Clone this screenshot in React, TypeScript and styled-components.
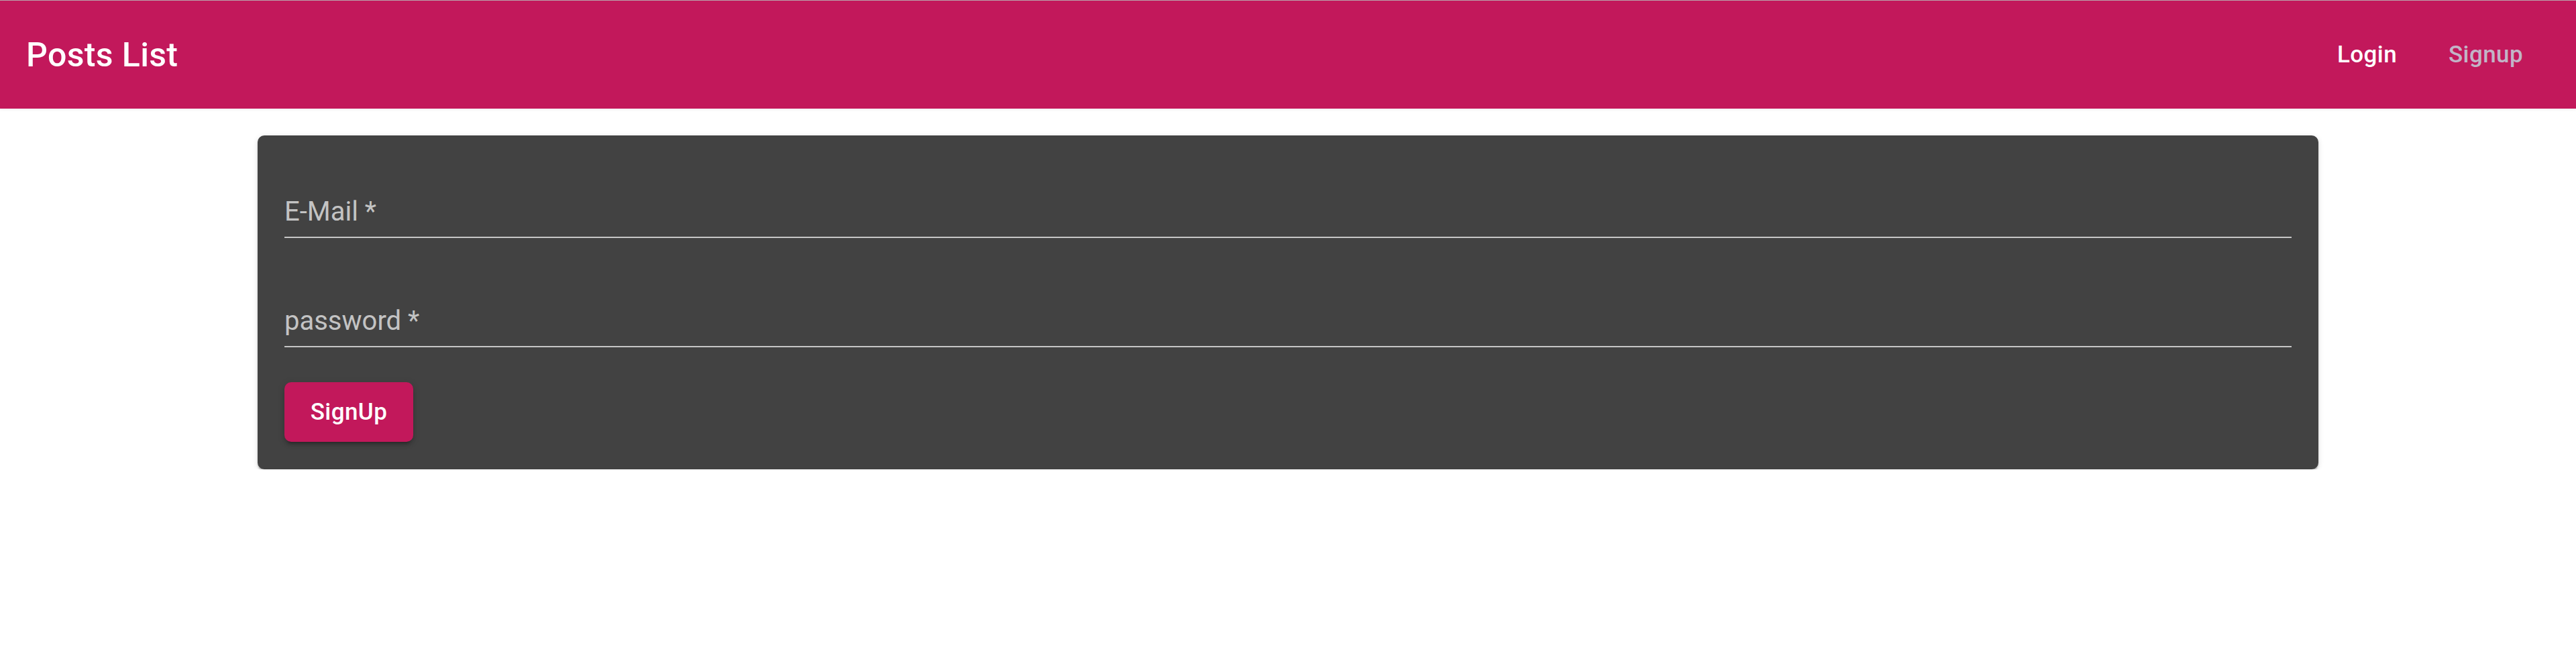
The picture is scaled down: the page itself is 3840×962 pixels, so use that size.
import React from "react";
import styled, { createGlobalStyle } from "styled-components";

const GlobalStyle = createGlobalStyle`
  html, body {
    margin: 0;
    padding: 0;
    background: #ffffff;
    font-family: Roboto, "Liberation Sans", Arial, sans-serif;
  }
  * { box-sizing: border-box; }
`;

const AppBar = styled.header`
  height: 162px;
  border-top: 1px solid #b9a3ab;
  background: #c2185b;
  display: flex;
  align-items: center;
  padding: 0 46px 0 39px;
  box-shadow: 0 2px 4px rgba(0, 0, 0, 0.06);
`;

const Title = styled.h1`
  flex: 1;
  margin: 0;
  font-size: 50px;
  font-weight: 500;
  letter-spacing: 0.0075em;
  color: #ffffff;
`;

const Nav = styled.nav`
  display: flex;
  align-items: center;
`;

const NavButton = styled.button<{ $active?: boolean }>`
  width: 177px;
  height: 90px;
  border: none;
  background: transparent;
  font-family: inherit;
  font-size: 35px;
  font-weight: 500;
  letter-spacing: 0.012em;
  color: ${(p) => (p.$active ? "#ffffff" : "#c2b4c7")};
  cursor: pointer;
  padding: 0;
`;

const Main = styled.main`
  width: 3072px;
  margin: 40px auto 0;
`;

const Card = styled.form`
  background: #424242;
  border-radius: 10px;
  padding: 40px 40px 41px;
  box-shadow: 0 5px 3px -2px rgba(0, 0, 0, 0.2), 0 2px 3px 0 rgba(0, 0, 0, 0.14),
    0 2px 8px 0 rgba(0, 0, 0, 0.12);
  display: flex;
  flex-direction: column;
  align-items: flex-start;
`;

const Field = styled.div<{ $gap: number }>`
  align-self: stretch;
  margin-top: ${(p) => p.$gap}px;
`;

const FieldLabel = styled.label`
  display: block;
  font-size: 40px;
  line-height: 40px;
  font-weight: 400;
  color: rgba(255, 255, 255, 0.7);
  padding-bottom: 17px;
  border-bottom: 2px solid #c6c6c6;
`;

const SubmitButton = styled.button`
  margin-top: 52px;
  width: 192px;
  height: 89px;
  border: none;
  border-radius: 10px;
  background: #c2185b;
  color: #ffffff;
  font-family: inherit;
  font-size: 35px;
  font-weight: 500;
  letter-spacing: 0.012em;
  box-shadow: 0 7px 3px -5px rgba(0, 0, 0, 0.2), 0 5px 5px 0 rgba(0, 0, 0, 0.14),
    0 2px 12px 0 rgba(0, 0, 0, 0.12);
  cursor: pointer;
`;

const fields = [
  { label: "E-Mail *", gap: 54 },
  { label: "password *", gap: 104 },
];

export default function App() {
  return (
    <>
      <GlobalStyle />
      <AppBar>
        <Title>Posts List</Title>
        <Nav>
          <NavButton $active>Login</NavButton>
          <NavButton>Signup</NavButton>
        </Nav>
      </AppBar>
      <Main>
        <Card onSubmit={(e) => e.preventDefault()}>
          {fields.map((f) => (
            <Field key={f.label} $gap={f.gap}>
              <FieldLabel>{f.label}</FieldLabel>
            </Field>
          ))}
          <SubmitButton type="submit">SignUp</SubmitButton>
        </Card>
      </Main>
    </>
  );
}
